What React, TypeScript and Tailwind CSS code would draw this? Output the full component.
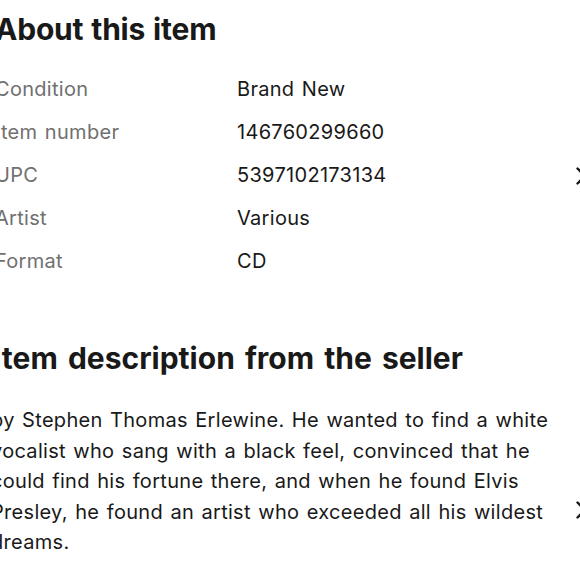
import React from 'react';

const specs = [
  { label: 'Condition', value: 'Brand New' },
  { label: 'Item number', value: '146760299660' },
  { label: 'UPC', value: '5397102173134' },
  { label: 'Artist', value: 'Various' },
  { label: 'Format', value: 'CD' },
];

function Chevron({ className = '' }: { className?: string }) {
  return (
    <svg viewBox="0 0 10 18" className={`w-[10px] h-[18px] shrink-0 ${className}`} fill="none">
      <path d="M1.5 1.5 L9 9 L1.5 16.5" stroke="#191919" strokeWidth="2.4" strokeLinecap="round" strokeLinejoin="round" />
    </svg>
  );
}

export default function App() {
  return (
    <div className="w-[580px] h-[580px] overflow-hidden bg-white text-[#191919] font-['Inter',sans-serif]">
      <div className="-ml-[5px] w-[591px] flex flex-col">
        {/* About this item */}
        <section>
          <h2 className="pt-[11px] text-[30px] leading-9 font-bold tracking-[-0.2px] [word-spacing:1px]">About this item</h2>
          <div className="mt-[21px] flex items-center">
            <dl className="flex-1 text-[20px] leading-[43px] tracking-[0.3px] [word-spacing:1.5px]">
              {specs.map((s) => (
                <div key={s.label} className="flex">
                  <dt className="w-[242px] shrink-0 text-[#707070]">{s.label}</dt>
                  <dd>{s.value}</dd>
                </div>
              ))}
            </dl>
            <Chevron />
          </div>
        </section>

        {/* Seller description */}
        <section className="mt-[57px]">
          <h2 className="-ml-[2px] text-[30px] leading-9 font-bold [word-spacing:3px]">Item description from the seller</h2>
          <div className="mt-[29px] flex items-start">
            <p className="-ml-[4px] flex-1 text-[20px] leading-[30.5px] tracking-[0.3px] [word-spacing:1.5px]">
              by Stephen Thomas Erlewine. He wanted to find a white
              <br />
              vocalist who sang with a black feel, convinced that he
              <br />
              could find his fortune there, and when he found Elvis
              <br />
              Presley, he found an artist who exceeded all his wildest
              <br />
              dreams.
            </p>
            <Chevron className="mt-[96px]" />
          </div>
        </section>
      </div>
    </div>
  );
}
